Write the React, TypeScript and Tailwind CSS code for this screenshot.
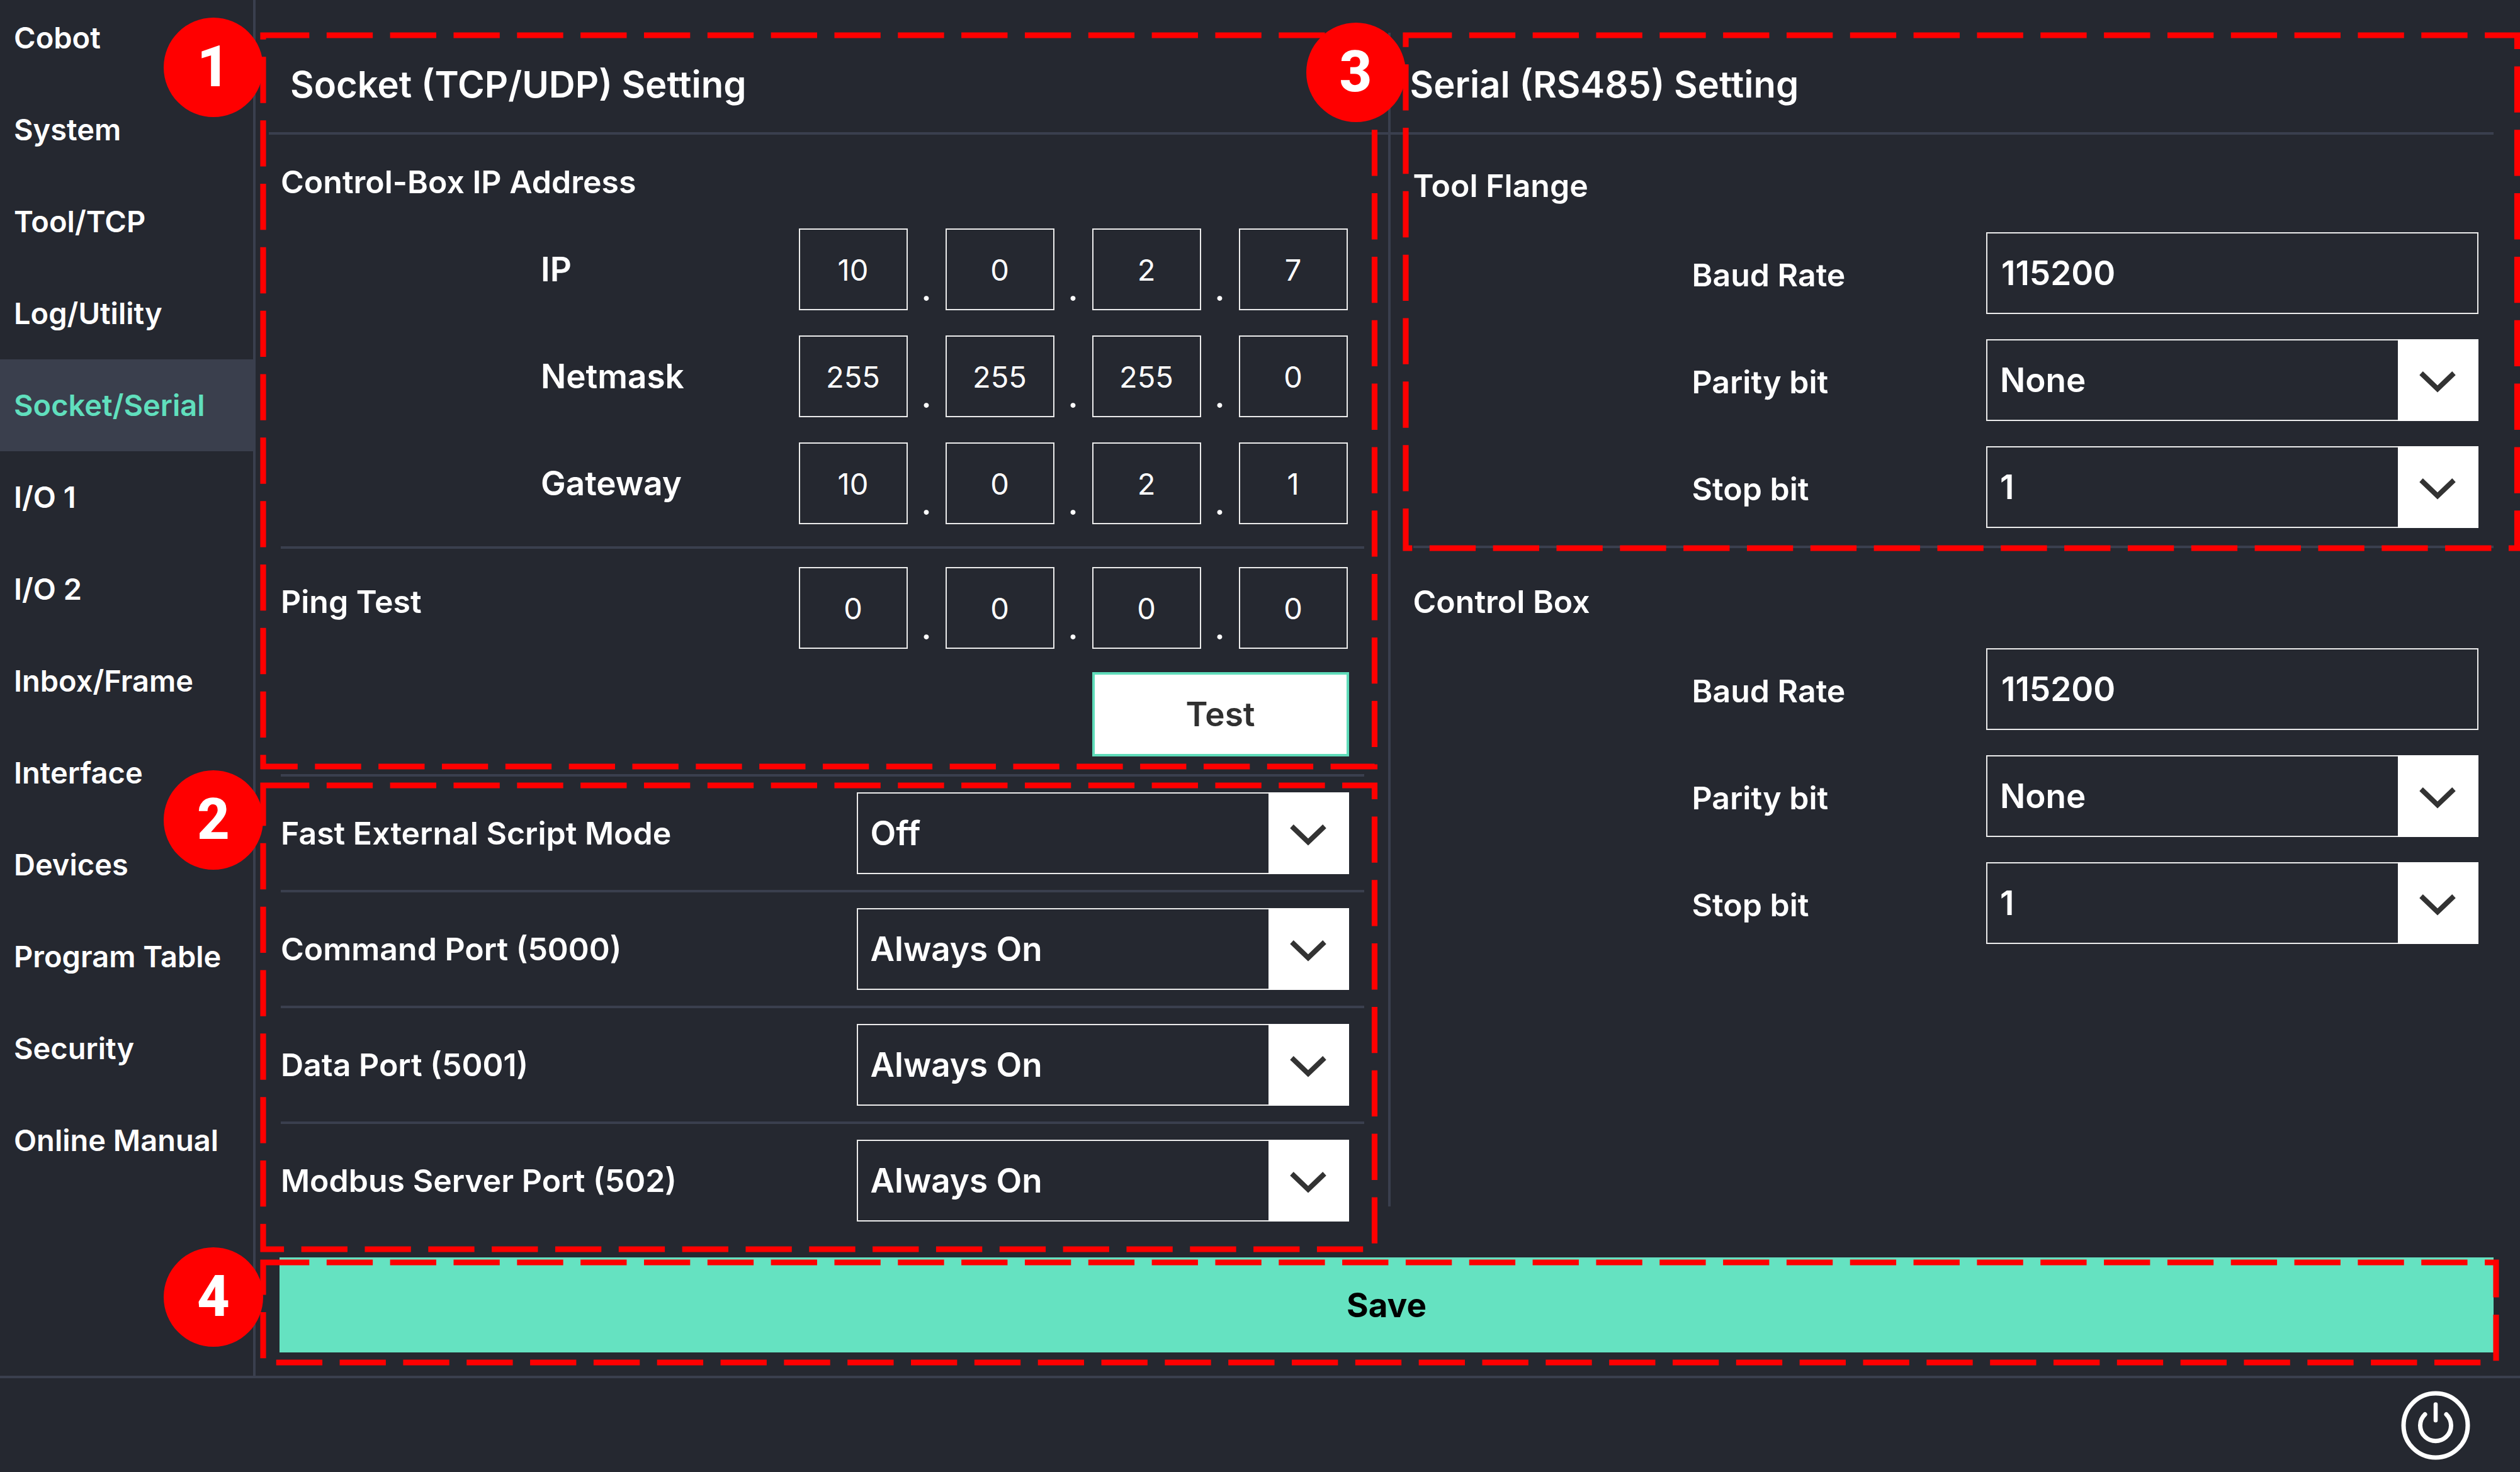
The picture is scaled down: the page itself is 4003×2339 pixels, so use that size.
import React from 'react';

const NAV_ITEMS = [
  'Cobot',
  'System',
  'Tool/TCP',
  'Log/Utility',
  'Socket/Serial',
  'I/O 1',
  'I/O 2',
  'Inbox/Frame',
  'Interface',
  'Devices',
  'Program Table',
  'Security',
  'Online Manual',
];

const ACTIVE_ITEM = 'Socket/Serial';

/** Dashed outline that marks a region, with its numbered badge. */
function Callout({ n, frame, badge }: { n: number; frame: string; badge: string }) {
  return (
    <div className={`pointer-events-none absolute z-10 ${frame}`}>
      <svg className="absolute inset-0 h-full w-full overflow-visible" aria-hidden="true">
        <rect
          width="100%"
          height="100%"
          fill="none"
          stroke="#ff0000"
          strokeWidth="9.17"
          strokeDasharray="73.33 27.5"
        />
      </svg>
      <span
        className={`absolute flex size-[158px] items-center justify-center rounded-full bg-[#ff0000] font-[Roboto,sans-serif] text-[90px] leading-none font-extrabold text-white ${badge}`}
      >
        {n}
      </span>
    </div>
  );
}

function Sidebar() {
  return (
    <nav className="w-[406px] shrink-0 overflow-hidden border-r-4 border-[#3a3f4e]">
      <ul className="-mt-[13px]">
        {NAV_ITEMS.map((item) => (
          <li key={item}>
            <a
              href="#"
              className={
                item === ACTIVE_ITEM
                  ? 'flex h-[146px] items-center bg-[#3a3f4d] pl-[22px] text-[47px] font-semibold whitespace-nowrap text-[#60dfbd]'
                  : 'flex h-[146px] items-center pl-[22px] text-[47px] font-semibold whitespace-nowrap'
              }
            >
              {item}
            </a>
          </li>
        ))}
      </ul>
    </nav>
  );
}

function Address({ id, label, octets }: { id: string; label: string; octets: string[] }) {
  return (
    <div role="group" aria-label={label} className="flex items-end">
      {octets.map((octet, i) => (
        <React.Fragment key={i}>
          {i > 0 && (
            <span className="w-[60px] pb-2 text-center text-[50px] leading-[50px] font-semibold">.</span>
          )}
          <input
            id={i === 0 ? id : undefined}
            aria-label={`${label} octet ${i + 1}`}
            defaultValue={octet}
            className="h-[130px] w-[173px] border-2 border-[#ececec] bg-transparent text-center text-[47px] font-normal outline-none"
          />
        </React.Fragment>
      ))}
    </div>
  );
}

function AddressRow({ id, label, octets }: { id: string; label: string; octets: string[] }) {
  return (
    <div className="flex items-center justify-between pr-[26px] pl-[413px]">
      <label htmlFor={id} className="text-[53px] leading-[70px] font-semibold">
        {label}
      </label>
      <Address id={id} label={label} octets={octets} />
    </div>
  );
}

function Dropdown({ id, value, options }: { id: string; value: string; options: string[] }) {
  return (
    <div className="relative w-[782px]">
      <select
        id={id}
        defaultValue={value}
        className="block h-[130px] w-full appearance-none border-2 border-[#ececec] bg-[#252830] pr-[140px] pl-5 text-[53px] leading-[70px] font-semibold outline-none"
      >
        {options.map((option) => (
          <option key={option}>{option}</option>
        ))}
      </select>
      <span className="pointer-events-none absolute inset-y-0 right-0 flex w-32 items-center justify-center bg-white">
        <svg width="64" height="40" viewBox="0 0 64 40" fill="none" aria-hidden="true">
          <path d="M5 9 31 34 57 9" stroke="#333333" strokeWidth="8" />
        </svg>
      </span>
    </div>
  );
}

function PortRow({ id, label, value }: { id: string; label: string; value: string }) {
  return (
    <div className="flex h-[184px] items-center justify-between border-b-4 border-[#3a3f4e] pr-6 last:border-transparent">
      <label htmlFor={id} className="text-[50px] leading-[70px] font-semibold">
        {label}
      </label>
      <Dropdown id={id} value={value} options={['Off', 'Always On']} />
    </div>
  );
}

function SerialRow({ id, label, children }: { id: string; label: string; children: React.ReactNode }) {
  return (
    <div className="flex items-center justify-between pr-6 pl-[443px]">
      <label htmlFor={id} className="pt-1.5 text-[50px] leading-[70px] font-semibold">
        {label}
      </label>
      {children}
    </div>
  );
}

function SerialFields({ prefix }: { prefix: string }) {
  return (
    <div className="mt-[39px] flex flex-col gap-10">
      <SerialRow id={`${prefix}-baud`} label="Baud Rate">
        <input
          id={`${prefix}-baud`}
          defaultValue="115200"
          className="h-[130px] w-[782px] border-2 border-[#ececec] bg-transparent px-[22px] text-[53px] leading-[70px] font-semibold outline-none"
        />
      </SerialRow>
      <SerialRow id={`${prefix}-parity`} label="Parity bit">
        <Dropdown id={`${prefix}-parity`} value="None" options={['None', 'Odd', 'Even']} />
      </SerialRow>
      <SerialRow id={`${prefix}-stop`} label="Stop bit">
        <Dropdown id={`${prefix}-stop`} value="1" options={['1', '2']} />
      </SerialRow>
    </div>
  );
}

function SocketPanel() {
  return (
    <div className="flex flex-col">
      <section className="relative">
        <h2 className="ml-[21px] flex h-[162px] items-center border-b-4 border-[#3a3f4e] pt-1.5 pl-[34px] text-[58px] font-semibold">
          Socket (TCP/UDP) Setting
        </h2>
        <div className="mr-[38px] ml-10 border-b-4 border-[#3a3f4e] pt-10 pb-[35px]">
          <h3 className="text-[50px] leading-[70px] font-semibold">Control-Box IP Address</h3>
          <div className="mt-[39px] flex flex-col gap-10">
            <AddressRow id="ip" label="IP" octets={['10', '0', '2', '7']} />
            <AddressRow id="netmask" label="Netmask" octets={['255', '255', '255', '0']} />
            <AddressRow id="gateway" label="Gateway" octets={['10', '0', '2', '1']} />
          </div>
        </div>
        <div className="mr-[38px] ml-10 border-b-4 border-[#3a3f4e] pt-[29px] pb-[28px]">
          <div className="flex items-start justify-between pr-[26px]">
            <label htmlFor="ping" className="pt-5 text-[50px] leading-[70px] font-semibold">
              Ping Test
            </label>
            <Address id="ping" label="Ping Test" octets={['0', '0', '0', '0']} />
          </div>
          <div className="mt-[37px] flex justify-end pr-6">
            <button
              type="button"
              className="h-[134px] w-[408px] border-4 border-[#5fdcba] bg-white text-[53px] leading-[70px] font-semibold text-[#303030]"
            >
              Test
            </button>
          </div>
        </div>
        <Callout n={1} frame="top-1 right-[21px] bottom-4 left-3" badge="-top-7 right-full" />
      </section>

      <section className="relative flex-1 pr-[38px] pl-10">
        <div>
          <PortRow id="fast-mode" label="Fast External Script Mode" value="Off" />
          <PortRow id="command-port" label="Command Port (5000)" value="Always On" />
          <PortRow id="data-port" label="Data Port (5001)" value="Always On" />
          <PortRow id="modbus-port" label="Modbus Server Port (502)" value="Always On" />
        </div>
        <Callout n={2} frame="top-3.5 right-[21px] bottom-[13px] left-3" badge="-top-6 right-full" />
      </section>
    </div>
  );
}

function SerialPanel() {
  return (
    <div className="mb-[81px] border-l-4 border-[#3a3f4e]">
      <section className="relative">
        <h2 className="mr-[42px] flex h-[162px] items-center border-b-4 border-[#3a3f4e] pt-1.5 pl-[31px] text-[58px] font-semibold">
          Serial (RS485) Setting
        </h2>
        <div className="mr-[42px] ml-9 border-b-4 border-[#3a3f4e] pt-[46px] pb-7">
          <h3 className="text-[50px] leading-[70px] font-semibold">Tool Flange</h3>
          <SerialFields prefix="flange" />
        </div>
        <Callout n={3} frame="top-1 right-[5px] bottom-0 left-6" badge="-top-5 right-full" />
      </section>
      <section className="mr-[42px] ml-9 pt-[50px]">
        <h3 className="text-[50px] leading-[70px] font-semibold">Control Box</h3>
        <SerialFields prefix="box" />
      </section>
    </div>
  );
}

export default function App() {
  return (
    <div className="flex min-h-screen flex-col overflow-hidden bg-[#252830] font-[Inter,sans-serif] text-white">
      <div className="flex flex-1">
        <Sidebar />
        <main className="flex min-w-0 flex-1 flex-col pt-[52px] pb-[37px]">
          <div className="grid flex-1 grid-cols-2">
            <SocketPanel />
            <SerialPanel />
          </div>
          <div className="relative mr-[42px] ml-[38px]">
            <button
              type="button"
              className="block h-[151px] w-full bg-[#65e2c1] text-[53px] leading-[70px] font-bold text-black"
            >
              Save
            </button>
            <Callout n={4} frame="top-2 -right-1 -bottom-4 -left-[26px]" badge="-top-6 right-full" />
          </div>
        </main>
      </div>
      <footer className="flex h-[153px] items-center justify-end border-t-4 border-[#3a3f4e] pr-[79px]">
        <button type="button" aria-label="Power">
          <svg width="110" height="110" viewBox="0 0 110 110" fill="none" stroke="#fff" strokeWidth="7" strokeLinecap="round" aria-hidden="true">
            <circle cx="55" cy="55" r="51" />
            <path d="M55 21.500V47" strokeWidth="6.5" />
            <path d="M38 37.500A24.500 24.500 0 1 0 72 37.500" />
          </svg>
        </button>
      </footer>
    </div>
  );
}
